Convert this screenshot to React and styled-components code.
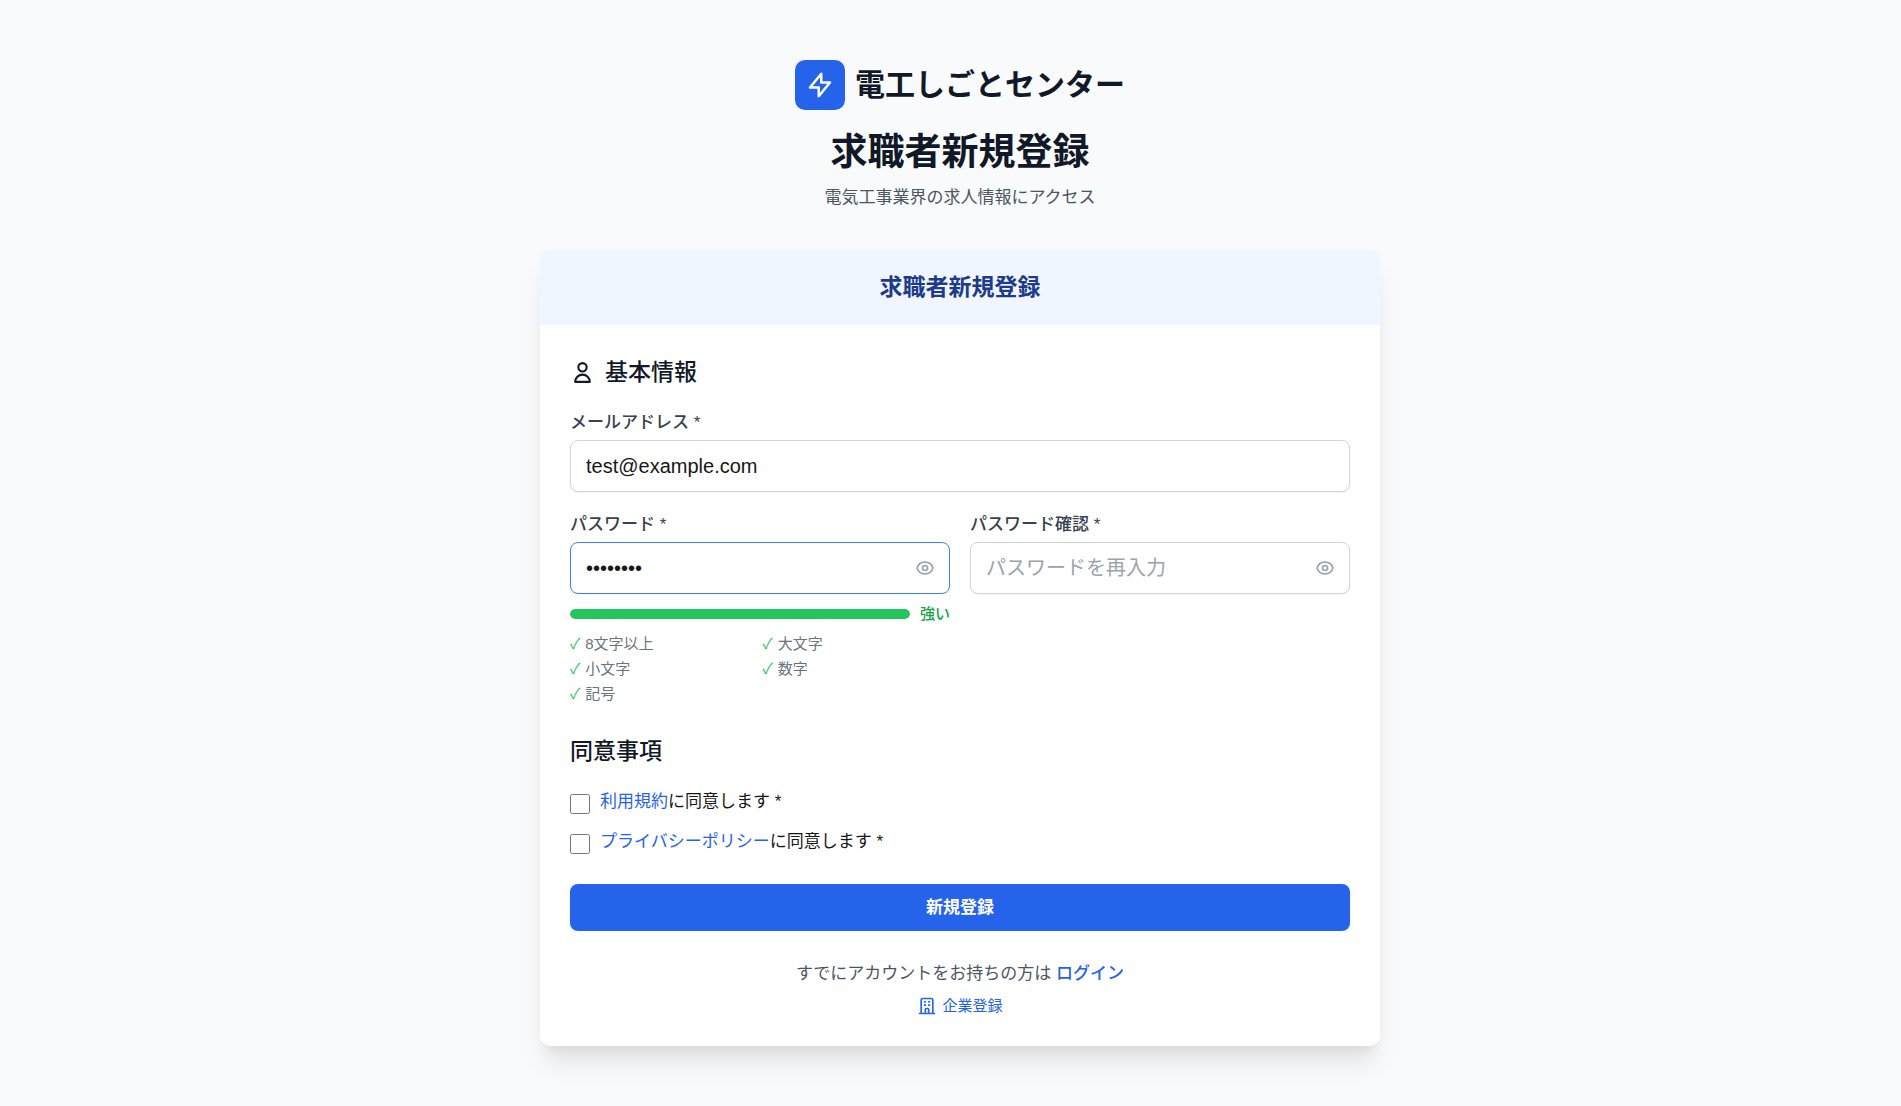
import React, { useState } from 'react';
import styled, { createGlobalStyle } from 'styled-components';

const rules = [
  { label: '8文字以上', test: (v) => v.length >= 8 },
  { label: '大文字', test: (v) => /[A-Z]/.test(v) },
  { label: '小文字', test: (v) => /[a-z]/.test(v) },
  { label: '数字', test: (v) => /[0-9]/.test(v) },
  { label: '記号', test: (v) => /[^A-Za-z0-9]/.test(v) },
];

const BoltIcon = () => (
  <Icon $size={30} viewBox="0 0 24 24" aria-hidden="true">
    <path d="M13 10V3L4 14h7v7l9-11h-7z" />
  </Icon>
);

const UserIcon = () => (
  <Icon $size={25} viewBox="0 0 24 24" aria-hidden="true">
    <path d="M16 7a4 4 0 11-8 0 4 4 0 018 0zM12 14a7 7 0 00-7 7h14a7 7 0 00-7-7z" />
  </Icon>
);

const EyeIcon = () => (
  <Icon $size={20} viewBox="0 0 24 24" aria-hidden="true">
    <path d="M15 12a3 3 0 11-6 0 3 3 0 016 0z" />
    <path d="M2.458 12C3.732 7.943 7.523 5 12 5c4.478 0 8.268 2.943 9.542 7-1.274 4.057-5.064 7-9.542 7-4.477 0-8.268-2.943-9.542-7z" />
  </Icon>
);

const BuildingIcon = () => (
  <Icon $size={20} viewBox="0 0 24 24" aria-hidden="true">
    <path d="M19 21V5a2 2 0 00-2-2H7a2 2 0 00-2 2v16m14 0h2m-2 0h-5m-9 0H3m2 0h5M9 7h1m-1 4h1m4-4h1m-1 4h1m-5 10v-5a1 1 0 011-1h2a1 1 0 011 1v5m-4 0h4" />
  </Icon>
);

const PasswordField = ({ id, label, value, placeholder, active, onChange, onFocus, children }) => {
  const [visible, setVisible] = useState(false);

  return (
    <Field>
      <Label htmlFor={id}>{label}</Label>
      <InputWrap>
        <Input
          id={id}
          type={visible ? 'text' : 'password'}
          value={value}
          placeholder={placeholder}
          onChange={(e) => onChange(e.target.value)}
          onFocus={onFocus}
          $active={active}
          $withToggle
        />
        <ToggleButton type="button" aria-label={visible ? '隠す' : '表示'} onClick={() => setVisible(!visible)}>
          <EyeIcon />
        </ToggleButton>
      </InputWrap>
      {children}
    </Field>
  );
};

const App = () => {
  const [email, setEmail] = useState('test@example.com');
  const [password, setPassword] = useState('Test123!');
  const [confirm, setConfirm] = useState('');
  const [active, setActive] = useState('password');

  const passed = rules.filter((rule) => rule.test(password)).length;

  return (
    <>
      <GlobalStyle />
      <Page>
        <Header>
          <Brand>
            <LogoMark><BoltIcon /></LogoMark>
            <BrandName>電工しごとセンター</BrandName>
          </Brand>
          <PageTitle>求職者新規登録</PageTitle>
          <Subtitle>電気工事業界の求人情報にアクセス</Subtitle>
        </Header>
        <Card>
          <CardHeader>
            <CardTitle>求職者新規登録</CardTitle>
          </CardHeader>
          <Form onSubmit={(e) => e.preventDefault()}>
            <Section>
              <SectionTitle><UserIcon />基本情報</SectionTitle>
              <Field>
                <Label htmlFor="email">メールアドレス *</Label>
                <Input
                  id="email"
                  type="email"
                  value={email}
                  onChange={(e) => setEmail(e.target.value)}
                  onFocus={() => setActive('email')}
                  $active={active === 'email'}
                />
              </Field>
              <Columns>
                <PasswordField
                  id="password"
                  label="パスワード *"
                  value={password}
                  onChange={setPassword}
                  onFocus={() => setActive('password')}
                  active={active === 'password'}
                >
                  <Strength>
                    <Track>
                      <Bar style={{ width: `${(passed / rules.length) * 100}%` }} />
                    </Track>
                    <StrengthText>{passed > 3 ? '強い' : '弱い'}</StrengthText>
                  </Strength>
                  <RuleList>
                    {rules.map((rule) => (
                      <Rule key={rule.label}>
                        <Mark>{rule.test(password) ? '✓' : '○'}</Mark>
                        {rule.label}
                      </Rule>
                    ))}
                  </RuleList>
                </PasswordField>
                <PasswordField
                  id="confirm"
                  label="パスワード確認 *"
                  placeholder="パスワードを再入力"
                  value={confirm}
                  onChange={setConfirm}
                  onFocus={() => setActive('confirm')}
                  active={active === 'confirm'}
                />
              </Columns>
            </Section>
            <Section>
              <SectionTitle>同意事項</SectionTitle>
              <Agreements>
                <Agreement>
                  <Checkbox id="terms" type="checkbox" />
                  <label htmlFor="terms"><TextLink href="#terms">利用規約</TextLink>に同意します *</label>
                </Agreement>
                <Agreement>
                  <Checkbox id="privacy" type="checkbox" />
                  <label htmlFor="privacy"><TextLink href="#privacy">プライバシーポリシー</TextLink>に同意します *</label>
                </Agreement>
              </Agreements>
            </Section>
            <SubmitButton type="submit">新規登録</SubmitButton>
            <Footer>
              <p>すでにアカウントをお持ちの方は <TextLink href="#login" $strong>ログイン</TextLink></p>
              <CompanyLink href="#company"><BuildingIcon />企業登録</CompanyLink>
            </Footer>
          </Form>
        </Card>
      </Page>
    </>
  );
};

const GlobalStyle = createGlobalStyle`
* {
  box-sizing: border-box;
  margin: 0;
  padding: 0;
}
body {
  background: #f9fafb;
  color: #171717;
  font-family: "Liberation Sans", "Noto Sans CJK JP", sans-serif;
  font-size: 17px;
  line-height: 25px;
}
input, button {
  font-family: inherit;
}
`

const Icon = styled.svg`
width: ${({ $size }) => $size}px;
height: ${({ $size }) => $size}px;
flex-shrink: 0;
fill: none;
stroke: currentColor;
stroke-width: 2;
stroke-linecap: round;
stroke-linejoin: round;
`

const Page = styled.main`
min-height: 100vh;
display: flex;
flex-direction: column;
align-items: center;
gap: 40px;
padding: 60px 0 60px 19px;
`

const Header = styled.header`
text-align: center;
`

const Brand = styled.div`
display: flex;
align-items: center;
justify-content: center;
gap: 10px;
margin-bottom: 20px;
`

const LogoMark = styled.div`
width: 50px;
height: 50px;
display: flex;
align-items: center;
justify-content: center;
border-radius: 10px;
background: #2563eb;
color: #fff;
`

const BrandName = styled.span`
color: #111827;
font-size: 30px;
font-weight: 700;
line-height: 40px;
`

const PageTitle = styled.h1`
margin-bottom: 10px;
color: #111827;
font-size: 37px;
font-weight: 700;
line-height: 45px;
`

const Subtitle = styled.p`
color: #4b5563;
`

const Card = styled.section`
width: 100%;
max-width: 840px;
overflow: hidden;
border-radius: 10px;
background: #fff;
box-shadow: 0 20px 25px -5px rgba(0, 0, 0, 0.1), 0 10px 10px -5px rgba(0, 0, 0, 0.04);
`

const CardHeader = styled.div`
padding: 20px 30px;
background: #eff6ff;
text-align: center;
`

const CardTitle = styled.h2`
color: #1e3a8a;
font-size: 23px;
font-weight: 700;
line-height: 35px;
`

const Form = styled.form`
display: flex;
flex-direction: column;
gap: 30px;
padding: 30px;
`

const Section = styled.div`
display: flex;
flex-direction: column;
gap: 20px;
`

const SectionTitle = styled.h3`
display: flex;
align-items: center;
gap: 10px;
color: #111827;
font-size: 23px;
font-weight: 500;
line-height: 35px;
`

const Columns = styled.div`
display: grid;
grid-template-columns: 1fr 1fr;
gap: 20px;
`

const Field = styled.div`
min-width: 0;
`

const Label = styled.label`
display: block;
margin-bottom: 5px;
color: #374151;
font-weight: 500;
`

const InputWrap = styled.div`
position: relative;
`

const Input = styled.input`
display: block;
width: 100%;
height: 52px;
padding: 10px ${({ $withToggle }) => ($withToggle ? '50px' : '15px')} 10px 15px;
border: 1px solid ${({ $active }) => ($active ? '#3b82f6' : '#d1d5db')};
border-radius: 8px;
outline: none;
background: #fff;
box-shadow: 0 1px 2px rgba(0, 0, 0, 0.05);
color: #171717;
font-size: 20px;
line-height: 30px;

&::placeholder {
  color: #9ca3af;
}
`

const ToggleButton = styled.button`
position: absolute;
top: 0;
right: 0;
bottom: 0;
display: flex;
align-items: center;
padding: 0 15px;
border: none;
background: none;
color: #9ca3af;
cursor: pointer;
`

const Strength = styled.div`
display: flex;
align-items: center;
gap: 10px;
margin-top: 10px;
`

const Track = styled.div`
flex: 1;
height: 10px;
overflow: hidden;
border-radius: 5px;
background: #e5e7eb;
`

const Bar = styled.div`
height: 100%;
border-radius: 5px;
background: #22c55e;
`

const StrengthText = styled.span`
color: #16a34a;
font-size: 15px;
font-weight: 500;
line-height: 20px;
`

const RuleList = styled.ul`
display: grid;
grid-template-columns: 1fr 1fr;
gap: 5px;
margin-top: 10px;
list-style: none;
color: #6b7280;
font-size: 15px;
line-height: 20px;
`

const Rule = styled.li`
display: flex;
align-items: center;
height: 20px;
`

const Mark = styled.span`
margin-right: 5px;
color: #22c55e;
`

const Agreements = styled.div`
display: flex;
flex-direction: column;
gap: 15px;
`

const Agreement = styled.div`
display: flex;
align-items: flex-start;
gap: 10px;
`

const Checkbox = styled.input`
width: 20px;
height: 20px;
margin-top: 5px;
`

const TextLink = styled.a`
color: #2563eb;
font-weight: ${({ $strong }) => ($strong ? 500 : 400)};
text-decoration: none;
`

const SubmitButton = styled.button`
padding: 10px 20px;
border: 1px solid transparent;
border-radius: 8px;
background: #2563eb;
color: #fff;
font-size: 17px;
font-weight: 700;
line-height: 25px;
cursor: pointer;
`

const Footer = styled.div`
display: flex;
flex-direction: column;
align-items: center;
gap: 10px;
color: #4b5563;
`

const CompanyLink = styled.a`
display: flex;
align-items: center;
gap: 5px;
color: #2563eb;
font-size: 15px;
line-height: 20px;
text-decoration: none;
`

export default App;
